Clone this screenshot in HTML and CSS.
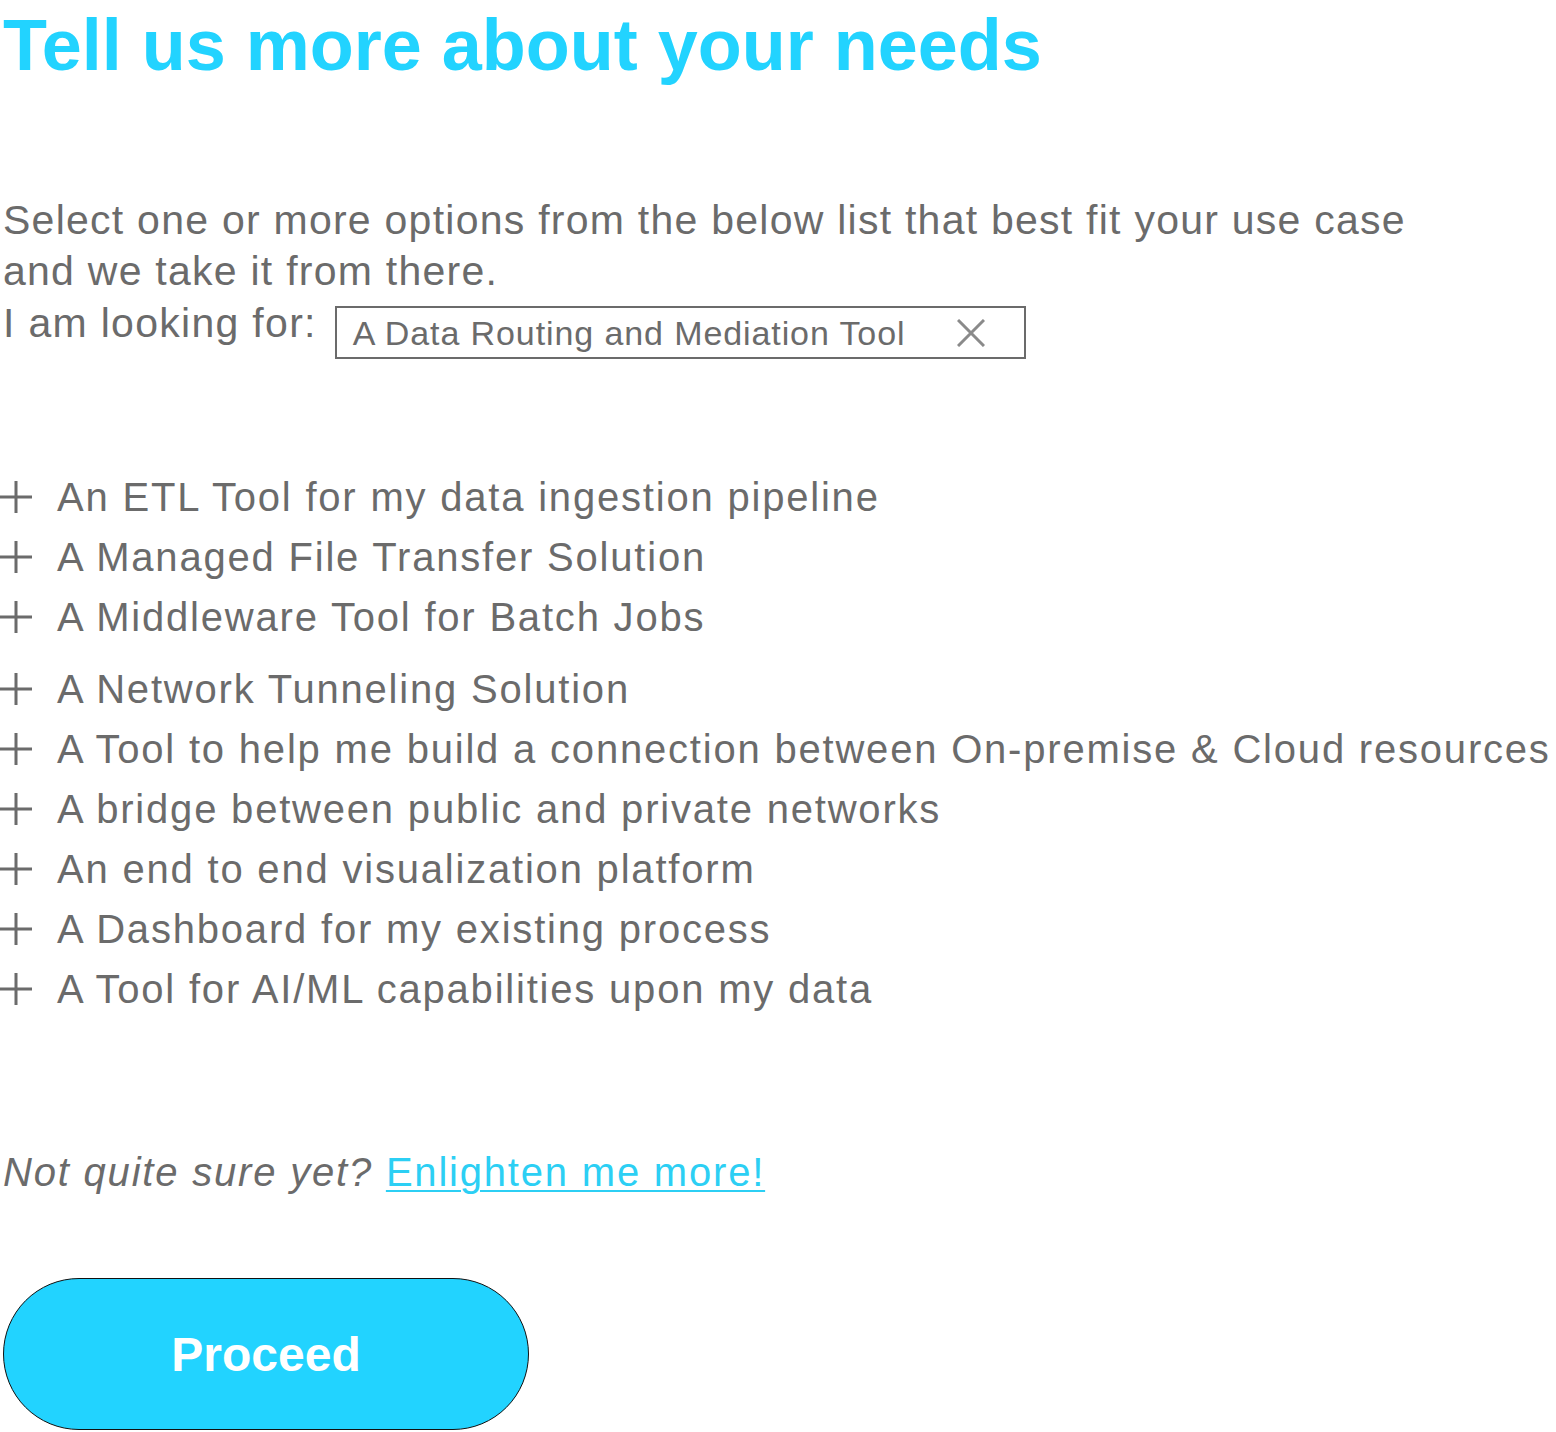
FILE: index.html
```html
<!DOCTYPE html>
<html lang="en">
<head>
<meta charset="utf-8">
<title>Tell us more about your needs</title>
<link rel="stylesheet" href="styles.css">
</head>
<body>
<main class="page">
  <h1 class="title">Tell us more about your needs</h1>

  <p class="intro">Select one or more options from the below list that best fit your use case<br>and we take it from there.</p>
  <div class="looking">
    <span class="looking-label">I am looking for:</span>
    <span class="chip">
      <span class="chip-text">A Data Routing and Mediation Tool</span>
      <svg class="chip-x" width="28" height="28" viewBox="0 0 28 28" aria-hidden="true">
        <path d="M1 1 L27 27 M27 1 L1 27" stroke="#8a8a8a" stroke-width="3" fill="none"/>
      </svg>
    </span>
  </div>

  <ul class="options">
    <li class="option"><svg class="plus" width="32" height="32" viewBox="0 0 32 32"><path d="M0 16 H32 M16 0 V32" stroke="#6b6b6b" stroke-width="3"/></svg>An ETL Tool for my data ingestion pipeline</li>
    <li class="option"><svg class="plus" width="32" height="32" viewBox="0 0 32 32"><path d="M0 16 H32 M16 0 V32" stroke="#6b6b6b" stroke-width="3"/></svg>A Managed File Transfer Solution</li>
    <li class="option"><svg class="plus" width="32" height="32" viewBox="0 0 32 32"><path d="M0 16 H32 M16 0 V32" stroke="#6b6b6b" stroke-width="3"/></svg>A Middleware Tool for Batch Jobs</li>
    <li class="option option-gap"><svg class="plus" width="32" height="32" viewBox="0 0 32 32"><path d="M0 16 H32 M16 0 V32" stroke="#6b6b6b" stroke-width="3"/></svg>A Network Tunneling Solution</li>
    <li class="option"><svg class="plus" width="32" height="32" viewBox="0 0 32 32"><path d="M0 16 H32 M16 0 V32" stroke="#6b6b6b" stroke-width="3"/></svg>A Tool to help me build a connection between On-premise &amp; Cloud resources</li>
    <li class="option"><svg class="plus" width="32" height="32" viewBox="0 0 32 32"><path d="M0 16 H32 M16 0 V32" stroke="#6b6b6b" stroke-width="3"/></svg>A bridge between public and private networks</li>
    <li class="option"><svg class="plus" width="32" height="32" viewBox="0 0 32 32"><path d="M0 16 H32 M16 0 V32" stroke="#6b6b6b" stroke-width="3"/></svg>An end to end visualization platform</li>
    <li class="option"><svg class="plus" width="32" height="32" viewBox="0 0 32 32"><path d="M0 16 H32 M16 0 V32" stroke="#6b6b6b" stroke-width="3"/></svg>A Dashboard for my existing process</li>
    <li class="option"><svg class="plus" width="32" height="32" viewBox="0 0 32 32"><path d="M0 16 H32 M16 0 V32" stroke="#6b6b6b" stroke-width="3"/></svg>A Tool for AI/ML capabilities upon my data</li>
  </ul>

  <p class="unsure"><em class="unsure-q">Not quite sure yet?</em> <a class="unsure-link" href="#">Enlighten me more!</a></p>

  <button class="proceed" type="button">Proceed</button>
</main>
</body>
</html>
```

FILE: styles.css
```css
html, body {
  margin: 0;
  padding: 0;
  background: #ffffff;
}

body {
  font-family: "Liberation Sans", Arial, Helvetica, sans-serif;
  color: #6b6b6b;
}

.page {
  width: 1556px;
  padding-left: 3px;
}

.title {
  margin: 0;
  font-size: 72px;
  font-weight: 700;
  line-height: 90px;
  color: #22d3ff;
}

.intro {
  margin: 105px 0 0 0;
  font-size: 41px;
  line-height: 51px;
  letter-spacing: 1.25px;
}

.looking {
  display: flex;
  align-items: flex-end;
  gap: 18px;
  height: 52px;
}

.looking-label {
  font-size: 41px;
  line-height: 51px;
  letter-spacing: 1.3px;
}

.chip {
  display: flex;
  align-items: center;
  box-sizing: border-box;
  width: 691px;
  height: 53px;
  border: 2px solid #6b6b6b;
  padding-left: 16px;
  margin-bottom: -10px;
}

.chip-text {
  font-size: 34px;
  line-height: 40px;
  color: #6b6b6b;
  letter-spacing: 0.9px;
}

.chip-x {
  margin-left: 52px;
}

.options {
  list-style: none;
  margin: 118px 0 0 0;
  padding: 0;
}

.option {
  display: flex;
  align-items: center;
  gap: 25px;
  font-size: 40px;
  line-height: 60px;
  margin-left: -3px;
  letter-spacing: 1.8px;
}

.option-gap {
  margin-top: 12px;
}

.plus {
  flex: none;
}

.unsure {
  margin: 128px 0 0 0;
  font-size: 40px;
  line-height: 50px;
  letter-spacing: 1.8px;
}

.unsure-q {
  font-style: italic;
  color: #6b6b6b;
}

.unsure-link {
  color: #2ccff4;
  text-decoration: underline;
  text-decoration-thickness: 2px;
  text-underline-offset: 4px;
}

.proceed {
  display: block;
  margin-top: 81px;
  width: 526px;
  height: 152px;
  border: 1.5px solid #111111;
  border-radius: 76px;
  background: #22d3ff;
  color: #ffffff;
  font-family: "Liberation Sans", Arial, Helvetica, sans-serif;
  font-size: 48px;
  font-weight: 700;
  padding: 0;
}
```
